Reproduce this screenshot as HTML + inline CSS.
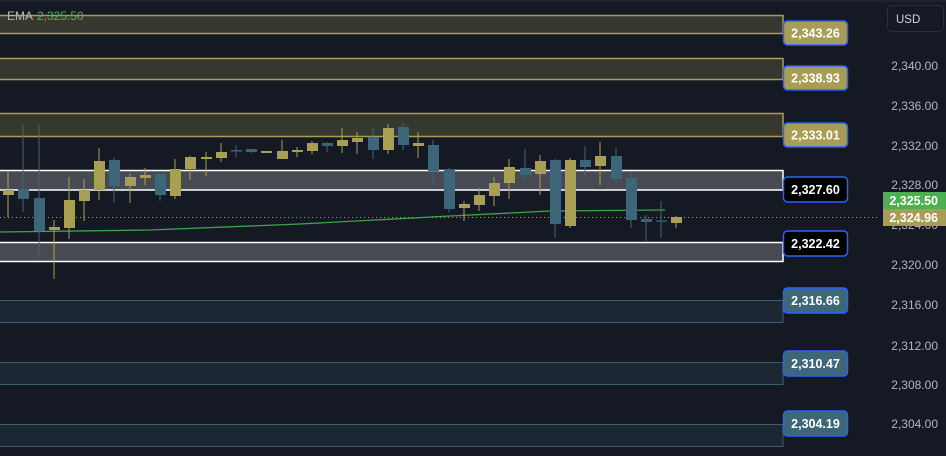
<!DOCTYPE html>
<html><head><meta charset="utf-8"><style>
html,body{margin:0;padding:0;background:#151924;width:946px;height:456px;overflow:hidden}
svg{display:block}
text{font-family:"Liberation Sans",sans-serif}
</style></head><body>
<svg width="946" height="456" viewBox="0 0 946 456" xmlns="http://www.w3.org/2000/svg">
<rect x="0" y="0" width="946" height="456" fill="#151924"/>
<rect x="0" y="0" width="946" height="2" fill="#1f232e"/>
<!-- gold zones -->
<g fill="#363830" stroke="#a89d56" stroke-width="1.5">
<rect x="-2" y="15.5" width="785" height="18"/>
<rect x="-2" y="58.5" width="785" height="21"/>
<rect x="-2" y="113.5" width="785" height="23"/>
</g>
<!-- white zones -->
<g fill="#474a53" stroke="#ffffff" stroke-width="1.5">
<rect x="-2" y="170.5" width="785" height="19.5"/>
<rect x="-2" y="242.5" width="785" height="19"/>
</g>
<!-- teal zones -->
<g fill="#1d2733" stroke="#3b6170" stroke-width="1">
<rect x="-2" y="300.5" width="785" height="22"/>
<rect x="-2" y="362.5" width="785" height="22"/>
<rect x="-2" y="424.5" width="785" height="22"/>
</g>
<!-- dotted price line -->
<line x1="0" y1="217.5" x2="880" y2="217.5" stroke="#a89d56" stroke-width="1" stroke-dasharray="1,3"/>
<!-- EMA -->
<polyline points="0,232 150,230 300,224 450,216 550,211 665,210" fill="none" stroke="#3fa34d" stroke-width="1.3"/>
<!-- candles -->
<g stroke-width="1">
<g fill="#a89f57" stroke="#a89f57">
<line x1="8" y1="171" x2="8" y2="217"/><rect x="3" y="190" width="11" height="5" stroke="none"/>
<line x1="54" y1="220" x2="54" y2="279"/><rect x="49" y="227" width="11" height="3" stroke="none"/>
<line x1="69" y1="177" x2="69" y2="239"/><rect x="64" y="200" width="11" height="28" stroke="none"/>
<line x1="84" y1="179" x2="84" y2="221"/><rect x="79" y="190" width="11" height="11" stroke="none"/>
<line x1="99" y1="148" x2="99" y2="200"/><rect x="94" y="161" width="11" height="29" stroke="none"/>
<line x1="130" y1="174" x2="130" y2="203"/><rect x="125" y="177" width="11" height="9" stroke="none"/>
<line x1="145" y1="168" x2="145" y2="185"/><rect x="140" y="175" width="11" height="3" stroke="none"/>
<line x1="175" y1="159" x2="175" y2="199"/><rect x="170" y="169" width="11" height="27" stroke="none"/>
<line x1="190" y1="156" x2="190" y2="180"/><rect x="185" y="157" width="11" height="12" stroke="none"/>
<line x1="206" y1="152" x2="206" y2="176"/><rect x="201" y="157" width="11" height="2" stroke="none"/>
<line x1="221" y1="143" x2="221" y2="162"/><rect x="216" y="152" width="11" height="6" stroke="none"/>
<rect x="261" y="151" width="11" height="2" stroke="none"/>
<line x1="282" y1="140" x2="282" y2="159"/><rect x="277" y="151" width="11" height="8" stroke="none"/>
<line x1="297" y1="147" x2="297" y2="157"/><rect x="292" y="150" width="11" height="2" stroke="none"/>
<line x1="312" y1="141" x2="312" y2="154"/><rect x="307" y="143" width="11" height="8" stroke="none"/>
<line x1="342" y1="128" x2="342" y2="153"/><rect x="337" y="140" width="11" height="6" stroke="none"/>
<line x1="357" y1="132" x2="357" y2="154"/><rect x="352" y="138" width="11" height="4" stroke="none"/>
<line x1="388" y1="124" x2="388" y2="154"/><rect x="383" y="128" width="11" height="22" stroke="none"/>
<line x1="418" y1="132" x2="418" y2="158"/><rect x="413" y="143" width="11" height="3" stroke="none"/>
<line x1="464" y1="201" x2="464" y2="221"/><rect x="459" y="204" width="11" height="4" stroke="none"/>
<line x1="479" y1="188" x2="479" y2="211"/><rect x="474" y="195" width="11" height="10" stroke="none"/>
<line x1="494" y1="177" x2="494" y2="206"/><rect x="489" y="183" width="11" height="13" stroke="none"/>
<line x1="509" y1="159" x2="509" y2="199"/><rect x="504" y="167" width="11" height="16" stroke="none"/>
<line x1="540" y1="155" x2="540" y2="195"/><rect x="535" y="161" width="11" height="13" stroke="none"/>
<line x1="570" y1="158" x2="570" y2="228"/><rect x="565" y="160" width="11" height="66" stroke="none"/>
<line x1="600" y1="142" x2="600" y2="185"/><rect x="595" y="156" width="11" height="10" stroke="none"/>
<line x1="676" y1="216" x2="676" y2="228"/><rect x="671" y="217" width="11" height="6" stroke="none"/>
</g>
<g fill="#3e6679" stroke="#3e6679">
<line x1="23" y1="125" x2="23" y2="212"/><rect x="18" y="189" width="11" height="10" stroke="none"/>
<line x1="39" y1="124" x2="39" y2="258"/><rect x="34" y="198" width="11" height="33" stroke="none"/>
<line x1="114" y1="158" x2="114" y2="203"/><rect x="109" y="160" width="11" height="26" stroke="none"/>
<line x1="160" y1="174" x2="160" y2="201"/><rect x="155" y="174" width="11" height="21" stroke="none"/>
<line x1="236" y1="145" x2="236" y2="157"/><rect x="231" y="150" width="11" height="1.5" stroke="none"/>
<line x1="251" y1="149" x2="251" y2="153"/><rect x="246" y="149" width="11" height="3" stroke="none"/>
<line x1="327" y1="142" x2="327" y2="152"/><rect x="322" y="143" width="11" height="3" stroke="none"/>
<line x1="373" y1="128" x2="373" y2="159"/><rect x="368" y="137" width="11" height="13" stroke="none"/>
<line x1="403" y1="123" x2="403" y2="150"/><rect x="398" y="127" width="11" height="18" stroke="none"/>
<line x1="433" y1="140" x2="433" y2="186"/><rect x="428" y="145" width="11" height="26" stroke="none"/>
<line x1="449" y1="168" x2="449" y2="212"/><rect x="444" y="170" width="11" height="39" stroke="none"/>
<line x1="525" y1="149" x2="525" y2="180"/><rect x="520" y="168" width="11" height="7" stroke="none"/>
<line x1="555" y1="159" x2="555" y2="238"/><rect x="550" y="160" width="11" height="64" stroke="none"/>
<line x1="585" y1="146" x2="585" y2="176"/><rect x="580" y="160" width="11" height="7" stroke="none"/>
<line x1="616" y1="148" x2="616" y2="183"/><rect x="611" y="156" width="11" height="23" stroke="none"/>
<line x1="631" y1="173" x2="631" y2="228"/><rect x="626" y="178" width="11" height="42" stroke="none"/>
<line x1="646" y1="215" x2="646" y2="241"/><rect x="641" y="219" width="11" height="3" stroke="none"/>
<line x1="661" y1="201" x2="661" y2="238"/><rect x="656" y="220.5" width="11" height="1.2" stroke="none"/>
</g>
</g>
<!-- zone labels -->
<g stroke="#2962ff" stroke-width="1.5" font-weight="bold" font-size="12.5">
<rect x="783.5" y="21" width="64" height="24" rx="4" fill="#a89d56"/>
<rect x="783.5" y="66" width="64" height="24" rx="4" fill="#a89d56"/>
<rect x="783.5" y="123" width="64" height="24" rx="4" fill="#a89d56"/>
<rect x="783.5" y="177" width="64" height="25" rx="4" fill="#000000"/>
<rect x="783.5" y="231" width="64" height="25" rx="4" fill="#000000"/>
<rect x="783.5" y="288" width="64" height="25" rx="4" fill="#3e6679"/>
<rect x="783.5" y="351" width="64" height="25" rx="4" fill="#3e6679"/>
<rect x="783.5" y="411" width="64" height="25" rx="4" fill="#3e6679"/>
</g>
<g fill="#ffffff" font-weight="bold" font-size="12.5" text-anchor="middle">
<text x="815.5" y="37.5">2,343.26</text>
<text x="815.5" y="82.5">2,338.93</text>
<text x="815.5" y="139.5">2,333.01</text>
<text x="815.5" y="194">2,327.60</text>
<text x="815.5" y="248">2,322.42</text>
<text x="815.5" y="305">2,316.66</text>
<text x="815.5" y="368">2,310.47</text>
<text x="815.5" y="428">2,304.19</text>
</g>
<!-- axis -->
<g fill="#b2b5be" font-size="12" text-anchor="end">
<text x="938" y="70">2,340.00</text>
<text x="938" y="110">2,336.00</text>
<text x="938" y="150">2,332.00</text>
<text x="938" y="189">2,328.00</text>
<text x="938" y="229">2,324.00</text>
<text x="938" y="269">2,320.00</text>
<text x="938" y="309">2,316.00</text>
<text x="938" y="350">2,312.00</text>
<text x="938" y="389">2,308.00</text>
<text x="938" y="428">2,304.00</text>
</g>
<rect x="883" y="192" width="63" height="17" fill="#4caf50"/>
<rect x="883" y="209" width="63" height="17" fill="#a89d56"/>
<g fill="#ffffff" font-weight="bold" font-size="12.5" text-anchor="end">
<text x="938" y="205">2,325.50</text>
<text x="938" y="222">2,324.96</text>
</g>
<rect x="887.5" y="5.5" width="56" height="26" rx="4" fill="#151924" stroke="#2a2e39"/>
<text x="896" y="23" fill="#d1d4dc" font-size="11.5">USD</text>
<text x="7" y="20" fill="#b2b5be" font-size="12">EMA</text>
<text x="37" y="20" fill="#4caf50" font-size="12">2,325.50</text>
</svg>
</body></html>
